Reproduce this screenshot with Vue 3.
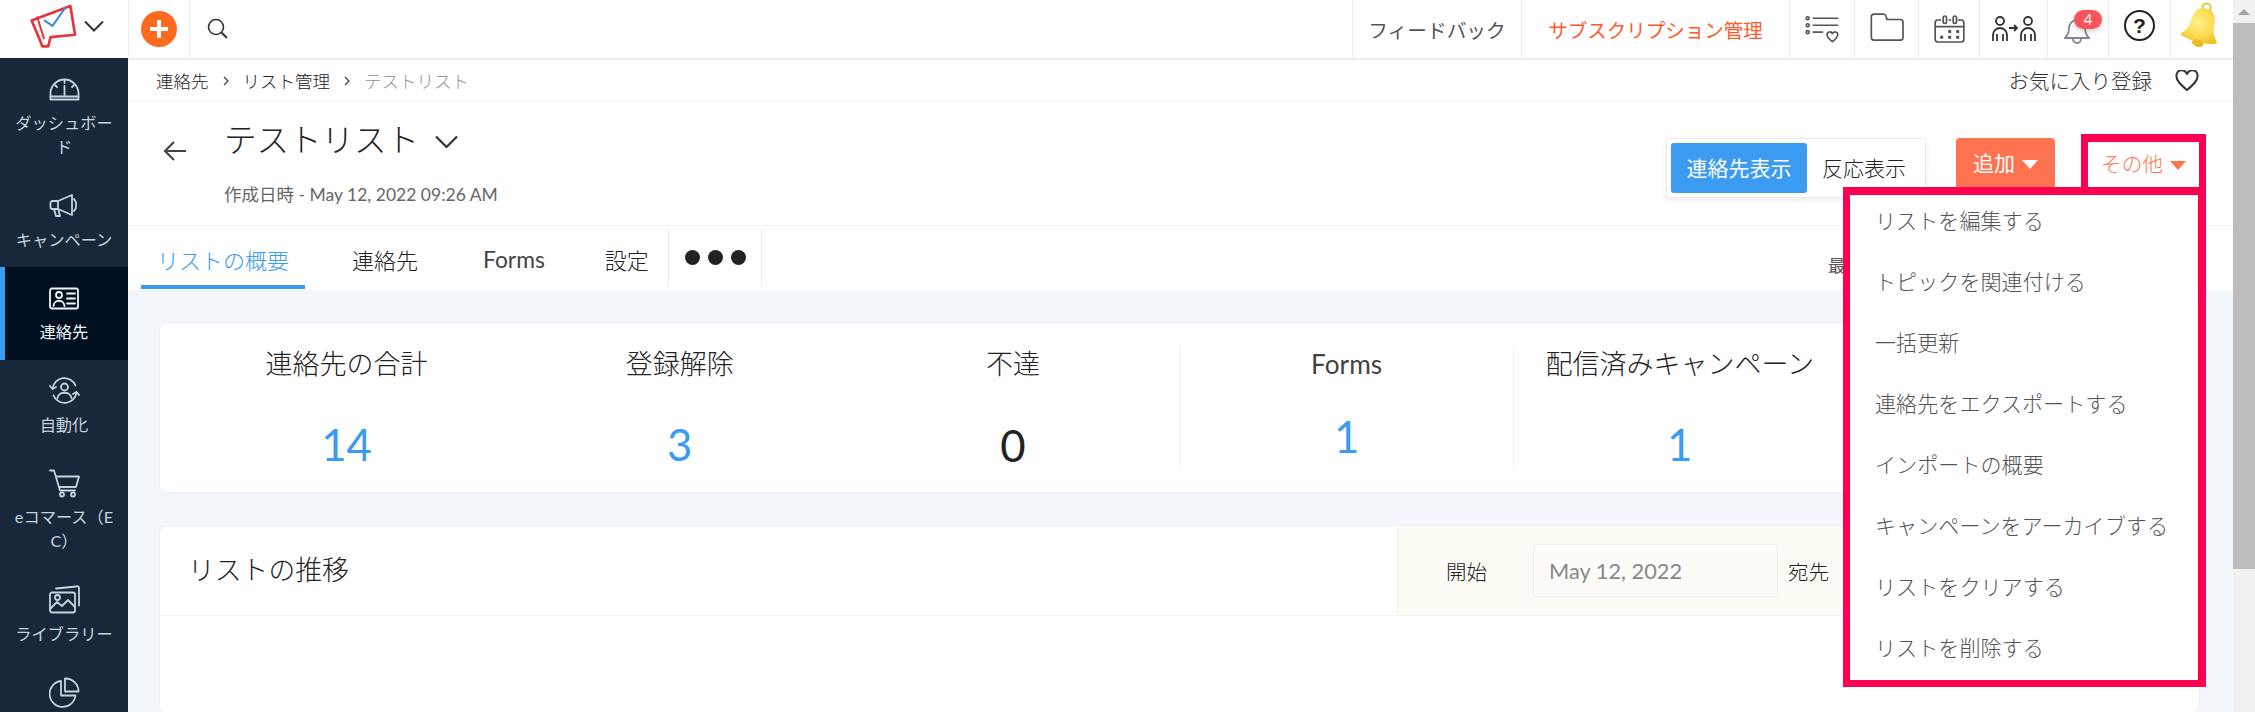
<template>
  <div class="shell">
    <aside class="sidebar">
      <div class="logo-cell">
        <svg class="logo" viewBox="85 10 145 140" width="48" height="47" fill="none" stroke-width="8" stroke-linejoin="round" stroke-linecap="round">
          <path stroke="#e8343c" d="M93 62 210 18 224 105 150 112 143 140 125 140 116 116Z" />
          <path stroke="#e8343c" d="M110 52 130 116" stroke-width="6" />
          <path stroke="#3b86d8" d="M132 62 156 78 194 24" stroke-width="6" />
        </svg>
        <svg width="20" height="12" viewBox="0 0 20 12" fill="none" stroke="#333" stroke-width="2"><path d="M1 1.500 10 10.500 19 1.500" /></svg>
      </div>
      <nav class="nav">
        <a v-for="item in navItems" :key="item.paths[0]" class="nav-item" :class="{ active: item.active }">
          <span class="nav-icon">
            <svg :width="item.w" :height="item.h" :viewBox="`0 0 ${item.w} ${item.h}`" fill="none" stroke="currentColor" stroke-width="1.800" stroke-linecap="round" stroke-linejoin="round">
              <path v-for="d in item.paths" :key="d" :d="d" />
            </svg>
          </span>
          <span v-if="item.label" class="nav-label">{{ item.label }}</span>
        </a>
      </nav>
    </aside>

    <div class="right">
      <header class="topbar">
        <div class="cell plus-cell">
          <svg width="36" height="36" viewBox="0 0 36 36"><circle cx="18" cy="18" r="18" fill="#ff6a1e" /><path d="M18 9v18M9 18h18" stroke="#fff" stroke-width="4" /></svg>
        </div>
        <div class="cell search-cell">
          <svg width="24" height="24" viewBox="0 0 24 24" fill="none" stroke="#333" stroke-width="1.600"><circle cx="10" cy="10" r="7.500" /><path d="M15.500 15.500 21 21" stroke-width="2" /></svg>
        </div>
        <div class="cell feedback">フィードバック</div>
        <div class="cell subscription">サブスクリプション管理</div>

        <div class="cell icon-cell w65">
          <svg viewBox="75 45 110 85" width="37" height="28" fill="none" stroke="#555" stroke-width="5">
            <circle cx="85" cy="55" r="4.500" /><circle cx="85" cy="76" r="4.500" /><circle cx="85" cy="97" r="4.500" />
            <path d="M100 55h78M100 76h78M100 97h32" />
            <path d="M160 126c-8-6-16-12-16-20a8 8 0 0 1 16-3 8 8 0 0 1 16 3c0 8-8 14-16 20z" />
          </svg>
        </div>
        <div class="cell icon-cell w64">
          <svg class="folder" viewBox="265 38 108 95" width="36" height="32" fill="none" stroke="#555" stroke-width="5">
            <path d="M272 62V52a8 8 0 0 1 8-8h28a8 8 0 0 1 8 6l3 10h40a8 8 0 0 1 8 8v46a8 8 0 0 1-8 8h-79a8 8 0 0 1-8-8z" />
          </svg>
        </div>
        <div class="cell icon-cell w61">
          <svg viewBox="458 38 98 90" width="33" height="30" fill="#555" stroke="#555" stroke-width="5">
            <path fill="none" d="M482 56h-10a8 8 0 0 0-8 8v50a8 8 0 0 0 8 8h70a8 8 0 0 0 8-8V64a8 8 0 0 0-8-8h-10M504 56h8M464 76h86" />
            <rect fill="none" x="488" y="44" width="10" height="22" rx="5" />
            <rect fill="none" x="518" y="44" width="10" height="22" rx="5" />
            <path stroke="none" d="M503 86h9v9h-9zM527 86h9v9h-9zM479 103h9v9h-9zM503 103h9v9h-9zM527 103h9v9h-9z" />
          </svg>
        </div>
        <div class="cell icon-cell w68">
          <svg width="44" height="28" viewBox="0 0 44 28" fill="none" stroke="#333" stroke-width="1.800">
            <circle cx="8" cy="6" r="4" /><circle cx="36" cy="6" r="4" />
            <path d="M1 26v-6a7 7 0 0 1 14 0v6M5 26v-7M11 26v-7M29 26v-6a7 7 0 0 1 14 0v6M33 26v-7M39 26v-7" />
            <path d="M17 13h8M22 10l3 3-3 3" />
          </svg>
        </div>
        <div class="cell icon-cell w61 bell-cell">
          <svg class="bell" width="26" height="28" viewBox="0 0 26 28" fill="none" stroke="#7d8894" stroke-width="1.800">
            <path d="M1 21h24c-3-3-4-6-4-10a8 8 0 0 0-16 0c0 4-1 7-4 10z" /><path d="M9 21v1a4 4 0 0 0 8 0v-1" />
          </svg>
          <span class="badge">4</span>
        </div>
        <div class="cell icon-cell w62"><span class="help">?</span></div>
        <div class="cell icon-cell w63">
          <svg class="gold-bell" width="44" height="52" viewBox="0 0 36 44">
            <defs>
              <radialGradient id="gold" cx="40%" cy="45%" r="65%">
                <stop offset="0" stop-color="#fff08a" /><stop offset="0.6" stop-color="#fbdc50" /><stop offset="1" stop-color="#efc022" />
              </radialGradient>
            </defs>
            <g transform="rotate(14 18 22)">
              <circle cx="18" cy="6" r="3.500" fill="none" stroke="#e6c23a" stroke-width="1.600" />
              <path fill="url(#gold)" d="M18 7c-7 0-10 5-10 13 0 6-3 9-6 13 6 4 26 4 32 0-3-4-6-7-6-13 0-8-3-13-10-13z" />
              <ellipse cx="18" cy="37" rx="5" ry="3" fill="#e9bb20" />
            </g>
          </svg>
        </div>
      </header>

      <main class="page">
        <div class="crumbs">
          <span class="crumb">連絡先</span>
          <svg class="crumb-sep" width="6" height="10" viewBox="0 0 6 10" fill="none" stroke="#444" stroke-width="1.300"><path d="M1 1l4 4-4 4" /></svg>
          <span class="crumb">リスト管理</span>
          <svg class="crumb-sep" width="6" height="10" viewBox="0 0 6 10" fill="none" stroke="#444" stroke-width="1.300"><path d="M1 1l4 4-4 4" /></svg>
          <span class="crumb current">テストリスト</span>
          <span class="fav">お気に入り登録</span>
          <svg class="fav-heart" width="24" height="22" viewBox="0 0 24 22" fill="none" stroke="#333" stroke-width="2"><path d="M12 20C6 15 1.500 11 1.500 6.500a5 5 0 0 1 10.500-2 5 5 0 0 1 10.500 2C22.500 11 18 15 12 20z" /></svg>
        </div>

        <section class="head">
          <svg class="back" width="24" height="20" viewBox="0 0 24 20" fill="none" stroke="#444" stroke-width="2.200"><path d="M23 10H2M11 1 2 10l9 9" /></svg>
          <div class="head-text">
            <h1>テストリスト
              <svg width="23" height="13" viewBox="0 0 23 13" fill="none" stroke="#333" stroke-width="2.200"><path d="M1 1.500 11.500 12 22 1.500" /></svg>
            </h1>
            <p>作成日時 - May 12, 2022 09:26 AM</p>
          </div>
          <div class="actions">
            <div class="toggle">
              <button class="on">連絡先表示</button>
              <button>反応表示</button>
            </div>
            <button class="add">追加<i class="tri" /></button>
            <div class="more-wrap">
              <button class="more">その他<i class="tri" /></button>
              <ul class="menu">
                <li v-for="m in menuItems" :key="m">{{ m }}</li>
              </ul>
            </div>
          </div>
        </section>

        <div class="tabs">
          <a class="tab active">リストの概要</a>
          <a class="tab">連絡先</a>
          <a class="tab latin">Forms</a>
          <a class="tab">設定</a>
          <div class="tab-more"><i /><i /><i /></div>
          <span class="updated">最</span>
        </div>

        <div class="content">
          <div class="card stats">
            <div v-for="s in stats" :key="s.label" class="stat" :class="{ line: s.line, up: s.up }">
              <div class="stat-label">{{ s.label }}</div>
              <div class="stat-num" :class="{ dark: s.value === 0 }">{{ s.value }}</div>
            </div>
          </div>

          <div class="card trend">
            <div class="trend-head">
              <h2>リストの推移</h2>
              <div class="filter">
                <label>開始</label>
                <input placeholder="May 12, 2022" readonly />
                <label class="to">宛先</label>
              </div>
            </div>
          </div>
        </div>
      </main>
    </div>

    <div class="scrollbar">
      <div class="scroll-up"><i /></div>
      <div class="scroll-thumb" />
    </div>
  </div>
</template>

<script setup>
const navItems = [
  {
    label: 'ダッシュボード', w: 31, h: 23,
    paths: ['M1.500 21.500v-6a14 14 0 0 1 28 0v6z', 'M1.500 18.500h28', 'M15.500 2v3', 'M15.500 8v10', 'M6 7l2 2', 'M25 7l-2 2']
  },
  {
    label: 'キャンペーン', w: 31, h: 25,
    paths: ['M23 2 9 8H3.500a2 2 0 0 0-2 2v4a2 2 0 0 0 2 2H9l14 6z', 'M9 8v8', 'M5 16l2 7h4l-1.500-6', 'M25 6c3 3 3 9 0 12']
  },
  {
    label: '連絡先', active: true, w: 30, h: 23,
    paths: ['M3 1.500h24a2 2 0 0 1 2 2v16a2 2 0 0 1-2 2H3a2 2 0 0 1-2-2v-16a2 2 0 0 1 2-2z', 'M13 8a3 3 0 1 1-6 0a3 3 0 1 1 6 0', 'M4.500 19c.5-7 10.500-7 11 0', 'M18 6.500h8', 'M18 11.500h8', 'M18 16.500h8']
  },
  {
    label: '自動化', w: 31, h: 27,
    paths: ['M3.500 11.500a12 12 0 0 1 23-3', 'M1 9l2.500 3L7 10', 'M27.500 15.500a12 12 0 0 1-23 3', 'M30 18l-2.500-3-3.500 2', 'M19 10a3.500 3.500 0 1 1-7 0a3.500 3.500 0 1 1 7 0', 'M8.500 21c1-7 13-7 14 0']
  },
  {
    label: 'eコマース（EC）', w: 31, h: 29,
    paths: ['M1 1.500h4l6 20h15', 'M7 7.500h23l-3 10.500H10', 'M15 25.500a2 2 0 1 1-4 0a2 2 0 1 1 4 0', 'M26 25.500a2 2 0 1 1-4 0a2 2 0 1 1 4 0']
  },
  {
    label: 'ライブラリー', w: 31, h: 29,
    paths: ['M3 7.500h21a2 2 0 0 1 2 2v16a2 2 0 0 1-2 2H3a2 2 0 0 1-2-2v-16a2 2 0 0 1 2-2z', 'M7 3.500 27 1.500a2 2 0 0 1 3 2v17', 'M1 24l7-7 5 4 6-6 7 7', 'M11 12.500a2.500 2.500 0 1 1-5 0a2.500 2.500 0 1 1 5 0']
  },
  {
    w: 31, h: 31,
    paths: ['M12 4a13 13 0 1 0 14.500 14.500H12z', 'M16 1.500A13 13 0 0 1 29.500 14.500H16z']
  }
]

const menuItems = [
  'リストを編集する',
  'トピックを関連付ける',
  '一括更新',
  '連絡先をエクスポートする',
  'インポートの概要',
  'キャンペーンをアーカイブする',
  'リストをクリアする',
  'リストを削除する'
]

const stats = [
  { label: '連絡先の合計', value: 14 },
  { label: '登録解除', value: 3 },
  { label: '不達', value: 0 },
  { label: 'Forms', value: 1, line: true, up: true },
  { label: '配信済みキャンペーン', value: 1, line: true }
]
</script>

<style>
html, body {
  margin: 0;
  height: 100%;
  overflow: hidden;
  background: #fff;
}
</style>

<style scoped>
.shell {
  display: flex;
  width: 2255px;
  height: 712px;
  overflow: hidden;
  font-family: Lato, "Noto Sans CJK JP", sans-serif;
  font-weight: 300;
  color: #333;
}

/* Sidebar */
.sidebar {
  width: 128px;
  flex: none;
  display: flex;
  flex-direction: column;
  background: #18283a;
}
.logo-cell {
  height: 58px;
  background: #fff;
  display: flex;
  align-items: center;
  padding-left: 29px;
  gap: 6px;
}
.logo { margin-top: -6px; }
.logo-cell svg:last-child { margin-top: -6px; margin-left: 1px; }
.nav { flex: 1; overflow: hidden; }
.nav-item {
  display: block;
  padding: 16px 10px 15.5px;
  color: #c6d3dd;
  text-align: center;
  position: relative;
}
.nav-item.active {
  background: #001021;
  color: #f2f6f9;
}
.nav-item.active::before {
  content: "";
  position: absolute;
  left: 0;
  top: 0;
  bottom: 0;
  width: 5px;
  background: #3a9cf2;
}
.nav-icon {
  height: 30px;
  margin-bottom: 7px;
  display: flex;
  align-items: center;
  justify-content: center;
}
.nav-label {
  display: block;
  font-size: 16.250px;
  font-weight: 400;
  line-height: 24px;
  word-break: break-all;
}

/* Top bar */
.right {
  flex: 1;
  min-width: 0;
  display: flex;
  flex-direction: column;
}
.topbar {
  height: 60px;
  flex: none;
  box-sizing: border-box;
  display: flex;
  border-bottom: 2px solid #ececec;
  background: #fff;
}
.cell {
  display: flex;
  align-items: center;
  justify-content: center;
  border-left: 1px solid #ececec;
  box-sizing: border-box;
}
.plus-cell { width: 61px; }
.search-cell { width: 56px; }
.feedback {
  margin-left: auto;
  width: 169px;
  font-size: 19.700px;
  font-weight: 400;
  color: #555;
}
.subscription {
  width: 268px;
  font-size: 19.500px;
  font-weight: 400;
  color: #ff5a2c;
}
.icon-cell { position: relative; }
.w61 { width: 61px; }
.w62 { width: 62px; }
.w63 { width: 63px; }
.w64 { width: 64px; }
.w65 { width: 65px; }
.w68 { width: 68px; }
.folder { margin-top: -3px; }
.gold-bell { margin-top: -6px; flex: none; }
.bell { margin-top: 4px; margin-right: 2px; }
.badge {
  position: absolute;
  left: 26px;
  top: 10px;
  width: 28px;
  height: 19px;
  border-radius: 10px;
  background: #f9545b;
  color: #fff;
  font-size: 15px;
  font-weight: 400;
  line-height: 19px;
  text-align: center;
  box-shadow: 0 2px 5px rgba(0, 0, 0, 0.2);
}
.help {
  width: 27px;
  height: 27px;
  border: 2px solid #222;
  border-radius: 50%;
  margin-top: -8px;
  font: 700 21px/27px "Liberation Sans", sans-serif;
  color: #222;
  text-align: center;
}

/* Page */
.page {
  flex: 1;
  min-height: 0;
  display: flex;
  flex-direction: column;
  background: #f3f7fb;
}
.crumbs {
  height: 40px;
  flex: none;
  display: flex;
  align-items: center;
  padding: 0 34px 0 28px;
  background: #fff;
  border-bottom: 1px solid #f3f5f8;
  font-size: 17.500px;
  color: #222;
}
.crumb-sep { margin: 2px 14px 0; }
.crumb.current { color: #8f949a; }
.fav {
  margin-left: auto;
  font-size: 20.500px;
  color: #333;
}
.fav-heart { margin-left: 23px; margin-top: 2px; }

.head {
  height: 125px;
  flex: none;
  box-sizing: border-box;
  display: flex;
  align-items: flex-start;
  padding-right: 27px;
  background: #fff;
  border-bottom: 1px solid #f2f5f8;
  position: relative;
}
.back { margin: 40px 0 0 35px; }
.head-text { margin-left: 37px; padding-top: 14px; }
.head-text h1 {
  margin: 0;
  font-size: 32.500px;
  font-weight: 300;
  line-height: 50px;
  color: #222;
  display: flex;
  align-items: center;
  gap: 16px;
}
.head-text h1 svg { margin-top: 3px; }
.head-text p {
  margin: 18px 0 0;
  font-size: 17.500px;
  line-height: 24px;
  color: #666;
  font-weight: 400;
}
.actions {
  margin-left: auto;
  display: flex;
  align-items: flex-start;
  padding-top: 33px;
}
button {
  font: inherit;
  border: 0;
  background: none;
  cursor: pointer;
}
.toggle {
  margin-top: 4px;
  height: 60px;
  box-sizing: border-box;
  display: flex;
  padding: 4px;
  background: #fff;
  border: 1px solid #e8ecef;
  border-radius: 4px;
  box-shadow: 0 2px 6px rgba(0, 0, 0, 0.08);
}
.toggle button {
  font-size: 21px;
  font-weight: 300;
  color: #222;
  padding: 0 15px 3px;
  border-radius: 3px;
  white-space: nowrap;
}
.toggle button.on {
  width: 136px;
  background: #3a9bf0;
  color: #fff;
  padding: 0 0 3px;
  font-weight: 400;
}
.add {
  margin: 4px 0 0 30px;
  width: 99px;
  height: 52px;
  padding: 0 0 4px;
  border-radius: 4px;
  background: #ff7350;
  color: #fff;
  font-size: 21px;
  font-weight: 400;
}
.tri {
  display: inline-block;
  width: 0;
  height: 0;
  margin-left: 7px;
  vertical-align: 2px;
  border-left: 8px solid transparent;
  border-right: 8px solid transparent;
  border-top: 9px solid currentColor;
}
.more-wrap {
  position: relative;
  margin-left: 26px;
}
.more {
  display: block;
  width: 125px;
  height: 56px;
  box-sizing: border-box;
  border: solid #ff0050;
  border-width: 8px 7px 0;
  background: #fff;
  color: #ff7350;
  font-size: 20.700px;
  font-weight: 300;
  padding: 0 0 7px;
}
.menu {
  position: absolute;
  right: 0;
  top: 53px;
  z-index: 5;
  width: 363px;
  height: 500px;
  box-sizing: border-box;
  margin: 0;
  padding: 0;
  list-style: none;
  background: #fff;
  border: solid #ff0050;
  border-width: 8px 8px 7px 7px;
}
.menu li {
  height: 61px;
  padding-left: 25px;
  line-height: 52px;
  font-size: 21.100px;
  color: #555;
  white-space: nowrap;
}

/* Tabs */
.tabs {
  height: 64px;
  flex: none;
  display: flex;
  align-items: flex-start;
  padding-left: 13px;
  background: #fff;
}
.tab {
  display: flex;
  align-items: center;
  box-sizing: border-box;
  height: 63px;
  padding: 6px 16px 0;
  font-size: 22px;
  color: #222;
  border-bottom: 4px solid transparent;
}
.tab:nth-child(1) { margin-right: 31px; }
.tab:nth-child(2) { margin-right: 33px; }
.tab:nth-child(3) { margin-right: 28px; }
.tab:nth-child(4) { margin-right: 3px; }
.tab.latin { font-size: 22.800px; font-weight: 400; color: #444; }
.tab.active {
  color: #3a9bf0;
  border-bottom-color: #3a9bf0;
}
.tab-more {
  display: flex;
  align-items: center;
  gap: 8px;
  padding: 0 15px 0 16px;
  height: 57px;
  margin-top: 3px;
  border-left: 1px solid #ececec;
  border-right: 1px solid #ececec;
}
.tab-more i {
  width: 15px;
  height: 15px;
  border-radius: 50%;
  background: #222;
}
.updated {
  margin-left: auto;
  width: 405px;
  font-size: 17.500px;
  font-weight: 400;
  line-height: 80px;
  color: #555;
}

/* Cards */
.content {
  flex: 1;
  min-height: 0;
  display: flex;
  flex-direction: column;
  gap: 32px;
  padding: 32px 33px 0 31px;
}
.card {
  background: #fff;
  border: 1px solid #edf1f5;
  border-radius: 8px;
  box-sizing: border-box;
}
.stats {
  height: 171px;
  flex: none;
  display: grid;
  grid-template-columns: repeat(6, 1fr);
  padding: 22px 20px;
}
.stat {
  height: 125px;
  text-align: center;
}
.stat.line { border-left: 1px solid #eff1f4; }
.stat-label {
  font-size: 27px;
  line-height: 38px;
  color: #222;
  white-space: nowrap;
}
.stat.up .stat-label { font-weight: 400; font-size: 26.250px; color: #444; }
.stat-num {
  margin-top: 36px;
  font-size: 43.750px;
  font-weight: 400;
  line-height: 50px;
  color: #3a9bf0;
}
.stat.up .stat-num { margin-top: 28px; }
.stat-num.dark { color: #222; margin-top: 37px; }

.trend {
  flex: 1;
  border-bottom: 0;
  overflow: hidden;
}
.trend-head {
  height: 89px;
  display: flex;
  align-items: center;
  border-bottom: 1px solid #f2f5f8;
}
.trend-head h2 {
  margin: 0 0 4px 28px;
  font-size: 26.800px;
  font-weight: 300;
  color: #222;
}
.filter {
  margin-left: auto;
  width: 802px;
  height: 100%;
  box-sizing: border-box;
  display: flex;
  align-items: center;
  padding-left: 48px;
  background: #fdfcf4;
  border-left: 1px solid #f2f2ec;
}
.filter label {
  font-size: 20.500px;
  color: #222;
}
.filter input {
  width: 245px;
  height: 53px;
  box-sizing: border-box;
  margin-left: 46px;
  padding: 0 15px;
  border: 1px solid #eeeeea;
  border-radius: 4px;
  background: #fdfcf9;
  outline: none;
  font: 400 21.800px Lato, sans-serif;
}
.filter input::placeholder { color: #888; }
.filter .to { margin-left: 10px; }

/* Scrollbar */
.scrollbar {
  width: 22px;
  flex: none;
  background: #f1f1f1;
}
.scroll-up {
  height: 23px;
  display: flex;
  align-items: center;
  justify-content: center;
}
.scroll-up i {
  width: 0;
  height: 0;
  border-left: 6px solid transparent;
  border-right: 6px solid transparent;
  border-bottom: 6px solid #a3a3a3;
}
.scroll-thumb {
  height: 546px;
  background: #bdbdbd;
}
</style>
